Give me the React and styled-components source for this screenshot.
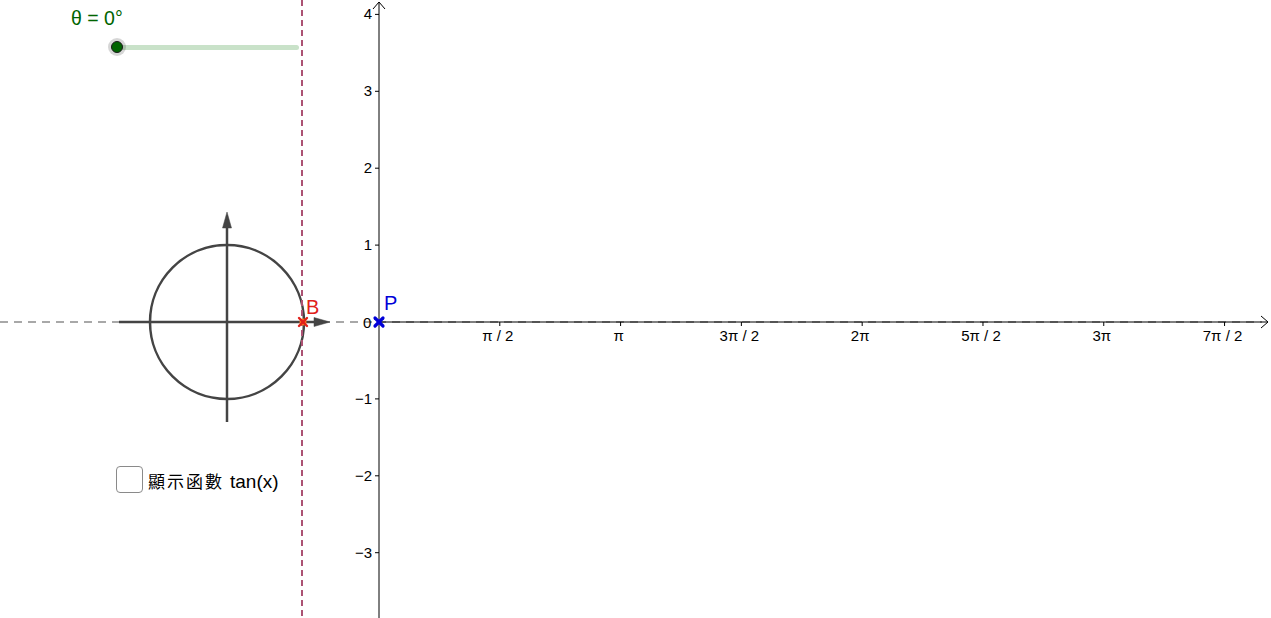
import styled, { createGlobalStyle } from "styled-components";

const GlobalStyle = createGlobalStyle`
  html, body {
    margin: 0;
    padding: 0;
    background: #ffffff;
    overflow: hidden;
  }
  body {
    font-family: "Liberation Sans", Arial, sans-serif;
  }
`;

// graph units
const ORIGIN_X = 379;
const ORIGIN_Y = 322;
const UNIT = 76.9;

const xLabels = ["π / 2", "π", "3π / 2", "2π", "5π / 2", "3π", "7π / 2"];
const yLabels = [4, 3, 2, 1, -1, -2, -3];

const Canvas = styled.div`
  position: relative;
  width: 1271px;
  height: 618px;
  overflow: hidden;
  background: #ffffff;
`;

const Graph = styled.svg`
  position: absolute;
  inset: 0;
  display: block;
  font-family: "Liberation Sans", Arial, sans-serif;
`;

const SliderBox = styled.div`
  position: absolute;
  left: 71px;
  top: 6px;
  width: 240px;
`;

const SliderLabel = styled.div`
  color: #006400;
  font-size: 19.5px;
  line-height: 24px;
  height: 24px;
`;

const Track = styled.div`
  position: relative;
  margin: 15px 0 0 46px;
  width: 182px;
  height: 5px;
  border-radius: 3px;
  background: #c9e2c9;
`;

const Knob = styled.div`
  position: absolute;
  left: -6px;
  top: -4px;
  width: 10px;
  height: 10px;
  border-radius: 50%;
  background: #006400;
  border: 1px solid #1a1a1a;
  box-shadow: 0 0 0 3px rgba(0, 0, 0, 0.16);
`;

const CheckRow = styled.label`
  position: absolute;
  left: 116px;
  top: 465px;
  display: flex;
  align-items: center;
  gap: 5px;
  font-size: 19px;
  color: #000;
  font-family: "Liberation Sans", "Noto Sans CJK TC", sans-serif;
`;

const Box = styled.span`
  box-sizing: border-box;
  width: 27px;
  height: 27px;
  border: 1px solid #8a8a8a;
  border-radius: 4px;
  background: #fff;
`;

const Caption = styled.span`
  display: flex;
  align-items: baseline;
  gap: 6px;
  padding-top: 3px;
`;

const Cjk = styled.span`
  font-family: "Noto Sans CJK TC", sans-serif;
  font-size: 17px;
  letter-spacing: 2px;
`;

function Axes() {
  return (
    <g>
      {/* dashed reference line */}
      <line x1="0" y1={ORIGIN_Y} x2="1262" y2={ORIGIN_Y} stroke="#8c8c8c" strokeWidth="1.3" strokeDasharray="8 6" />
      {/* x axis (positive only) */}
      <line x1={ORIGIN_X} y1={ORIGIN_Y} x2="1268" y2={ORIGIN_Y} stroke="#000" strokeWidth="1" />
      <path d="M1261 316 L1268 322 L1261 328" fill="none" stroke="#000" strokeWidth="1" />
      {/* y axis */}
      <line x1={ORIGIN_X} y1="2" x2={ORIGIN_X} y2="618" stroke="#000" strokeWidth="1" />
      <path d={`M${ORIGIN_X - 6} 9 L${ORIGIN_X} 2 L${ORIGIN_X + 6} 9`} fill="none" stroke="#000" strokeWidth="1" />
      {xLabels.map((t, i) => {
        const x = ORIGIN_X + ((i + 1) * Math.PI * UNIT) / 2;
        return (
          <g key={t}>
            <line x1={x} y1={ORIGIN_Y} x2={x} y2={ORIGIN_Y + 4} stroke="#000" />
            <text x={x - 2} y="341" fontSize="15" textAnchor="middle">{t}</text>
          </g>
        );
      })}
      {yLabels.map((v) => {
        const y = ORIGIN_Y - v * UNIT;
        return (
          <g key={v}>
            <line x1={ORIGIN_X - 4} y1={y} x2={ORIGIN_X} y2={y} stroke="#000" />
            <text x={ORIGIN_X - 7} y={y + 5} fontSize="15" textAnchor="end">
              {v < 0 ? `−${-v}` : v}
            </text>
          </g>
        );
      })}
      <text x="363" y="328" fontSize="15">0</text>
    </g>
  );
}

function UnitCircle() {
  return (
    <g stroke="#444" fill="#444">
      <circle cx="227" cy={ORIGIN_Y} r="77" fill="none" strokeWidth="2.5" />
      <line x1="119" y1={ORIGIN_Y} x2="318" y2={ORIGIN_Y} strokeWidth="2.5" />
      <path d="M314 317.5 L330 322 L314 326.5 Z" strokeWidth="0.5" />
      <line x1="227" y1="422" x2="227" y2="225" strokeWidth="2.5" />
      <path d="M222.5 228 L227 212 L231.5 228 Z" strokeWidth="0.5" />
    </g>
  );
}

function App() {
  return (
    <>
      <GlobalStyle />
      <Canvas>
        <Graph width="1271" height="618" viewBox="0 0 1271 618">
          <Axes />
          <UnitCircle />
          {/* tangent line x = 1 */}
          <line x1="302" y1="0" x2="302" y2="618" stroke="#ac5273" strokeWidth="2" strokeDasharray="6 4" />
          {/* point B */}
          <circle cx="303" cy="322" r="3.5" fill="#ff7a1a" />
          <g stroke="#e0201a" strokeWidth="2.4" strokeLinecap="round">
            <line x1="299" y1="318" x2="307" y2="326" />
            <line x1="307" y1="318" x2="299" y2="326" />
          </g>
          <text x="306" y="314" fontSize="20" fill="#e0201a">B</text>
          {/* point P */}
          <g stroke="#0000d8" strokeWidth="3.2" strokeLinecap="round">
            <line x1="375" y1="318" x2="383" y2="326" />
            <line x1="383" y1="318" x2="375" y2="326" />
          </g>
          <rect x="377" y="320" width="4" height="4" fill="#0000d8" />
          <text x="384" y="310" fontSize="20" fill="#0000d8">P</text>
        </Graph>

        <SliderBox>
          <SliderLabel>θ = 0°</SliderLabel>
          <Track>
            <Knob />
          </Track>
        </SliderBox>

        <CheckRow>
          <Box />
          <Caption>
            <Cjk>顯示函數</Cjk>
            <span>tan(x)</span>
          </Caption>
        </CheckRow>
      </Canvas>
    </>
  );
}

export default App;
